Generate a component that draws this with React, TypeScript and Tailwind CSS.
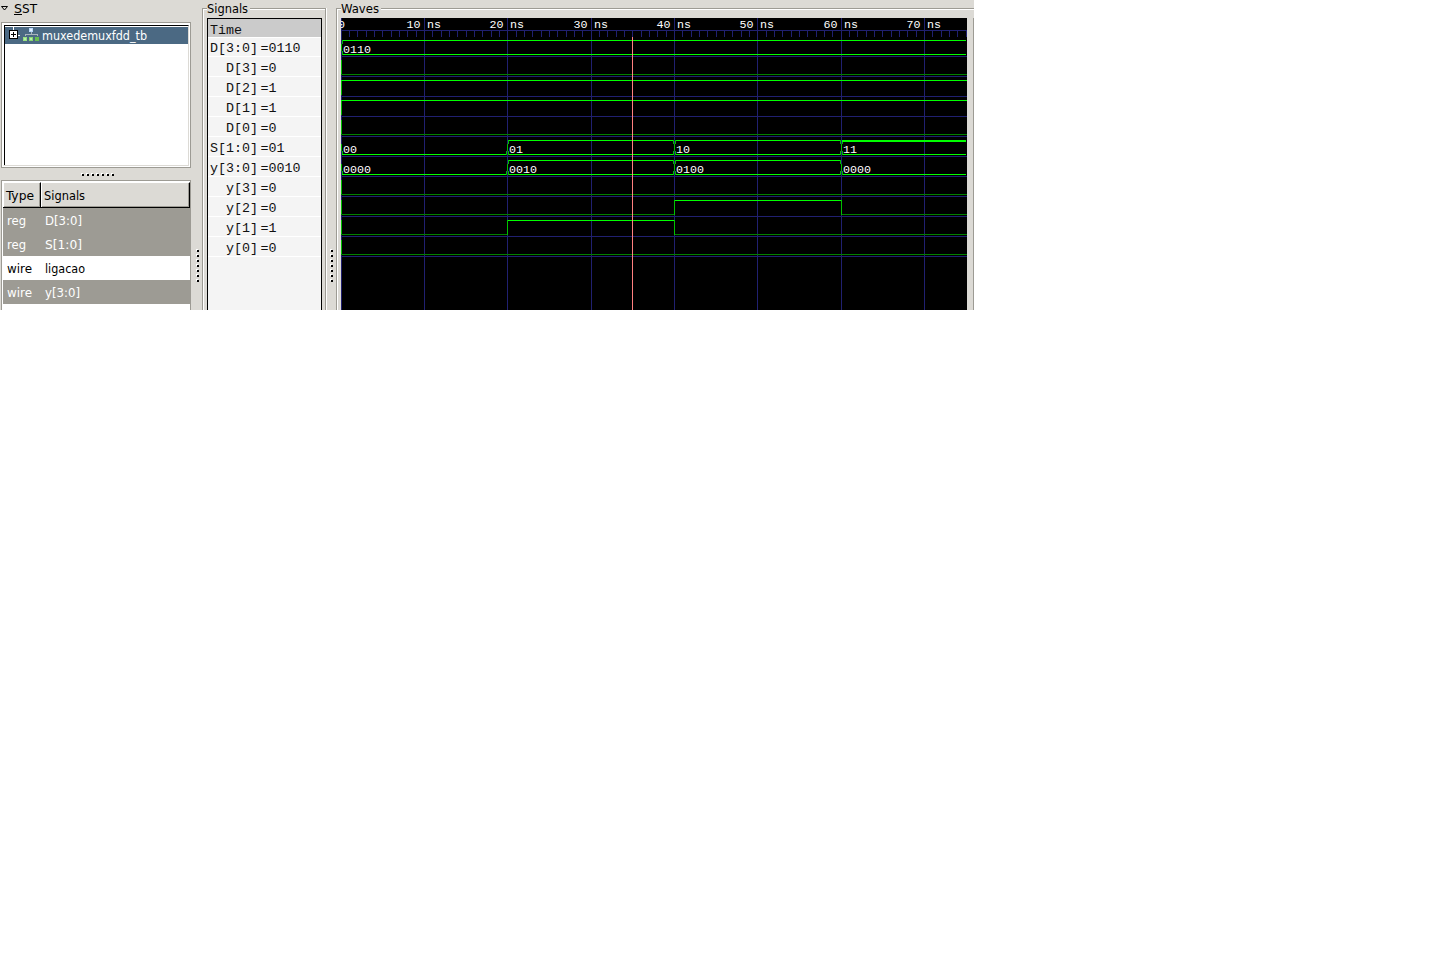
import React from 'react';

const UI = "font-['DejaVu_Sans_Condensed','DejaVu_Sans',sans-serif] text-[12px] [font-stretch:condensed]";
const START = 341;
const GRID = [0, 83, 166, 250, 333, 416, 500, 583];
const ROWS = [
  { name: 'D[3:0]', value: '0110' },
  { name: '  D[3]', value: '0' },
  { name: '  D[2]', value: '1' },
  { name: '  D[1]', value: '1' },
  { name: '  D[0]', value: '0' },
  { name: 'S[1:0]', value: '01' },
  { name: 'y[3:0]', value: '0010' },
  { name: '  y[3]', value: '0' },
  { name: '  y[2]', value: '0' },
  { name: '  y[1]', value: '1' },
  { name: '  y[0]', value: '0' },
];

function Label({ text, size, x, y, width, fill = '#000', className = '' }: {
  text: string; size: number; x: number; y: number; width: number; fill?: string; className?: string;
}) {
  return (
    <text x={x} y={y} fontSize={size} fill={fill} textLength={width} lengthAdjust="spacingAndGlyphs" className={className} xmlSpace="preserve">
      {text}
    </text>
  );
}

/* A short piece of interface text, fitted to a fixed advance width. */
function Caption({ text, width, fill }: { text: string; width: number; fill?: string }) {
  return (
    <svg width={width + 2} height={18} className={`block shrink-0 overflow-visible ${UI}`}>
      <Label text={text} size={12} x={0} y={13} width={width} fill={fill} />
    </svg>
  );
}

function Grip({ vertical = false }: { vertical?: boolean }) {
  return (
    <div className={vertical ? 'flex flex-col gap-[2px]' : 'flex gap-[2px]'}>
      {Array.from({ length: 7 }, (_, i) => (
        <svg key={i} width="3" height="3" shapeRendering="crispEdges" className="block">
          <rect width="2" height="2" fill="#fff" />
          <rect x="1" y="1" width="2" height="2" fill="#000" />
        </svg>
      ))}
    </div>
  );
}

function Tree() {
  return (
    <div className="ml-px mt-[4px] h-[146px] w-[190px] border border-[#9d9b94] bg-white p-px">
      <div className="h-full border border-r-0 border-t-white border-l-white border-b-[#dcdad5] bg-white">
        <div className="h-full border border-b-0 border-l-black border-t-black border-r-[#dcdad5] pt-px">
          <div className="flex h-[17px] items-center bg-[#4b6983]">
            <svg width="37" height="17" shapeRendering="crispEdges" className="block shrink-0">
              <path d="M8 0h1v3h-1z M13 8h2v1h-2z" fill="#fff" />
              <rect x="4" y="3" width="9" height="9" fill="#000" />
              <rect x="5" y="4" width="7" height="7" fill="#fff" />
              <path d="M6 7h5v1h-5z M8 5h1v5h-1z" fill="#000" />
              <rect x="24" y="1" width="4" height="4" fill="#b9d7fa" />
              <rect x="25" y="2" width="2" height="2" fill="#e4f0ff" />
              <path d="M26 5v2M20 9V7h12v2" fill="none" stroke="#a9b4bd" />
              <rect x="18" y="10" width="4" height="4" fill="#98e080" />
              <rect x="24" y="10" width="4" height="4" fill="#87d570" />
              <rect x="30" y="10" width="4" height="4" fill="#67bd50" />
              <path d="M19 11h2v2h-2z M25 11h2v2h-2z" fill="#b6efa8" />
            </svg>
            <Caption text="muxedemuxfdd_tb" width={105} fill="#fff" />
          </div>
        </div>
      </div>
    </div>
  );
}

const VARIABLES = [
  { type: 'reg', name: 'D[3:0]', tw: 19, nw: 37, selected: true },
  { type: 'reg', name: 'S[1:0]', tw: 19, nw: 37, selected: true },
  { type: 'wire', name: 'ligacao', tw: 25, nw: 40, selected: false },
  { type: 'wire', name: 'y[3:0]', tw: 25, nw: 35, selected: true },
];

function Variables() {
  return (
    <div className="ml-px mt-[4px] h-[130px] w-[190px] overflow-hidden border border-b-0 border-[#9d9b94] bg-white pl-px pt-px">
      <div className="flex h-[26px] border-b border-black">
        <div className="flex h-[25px] w-[38px] items-center border-l border-t border-r border-l-white border-t-white border-r-black bg-[#dcdad5] pl-[2px] pt-px shadow-[inset_-1px_-1px_0_#9d9b94]">
          <Caption text="Type" width={28} />
        </div>
        <div className="flex h-[25px] flex-1 items-center border-l border-t border-r border-l-white border-t-white border-r-black bg-[#dcdad5] pl-[2px] pt-px shadow-[inset_-1px_-1px_0_#9d9b94]">
          <Caption text="Signals" width={41} />
        </div>
      </div>
      {VARIABLES.map((v, i) => (
        <div key={i} className={v.selected ? 'flex h-6 items-center bg-[#9d9b94] pl-[4px] pt-[2px]' : 'flex h-6 items-center bg-white pl-[4px] pt-[2px]'}>
          <div className="w-[38px]"><Caption text={v.type} width={v.tw} fill={v.selected ? '#fff' : '#000'} /></div>
          <Caption text={v.name} width={v.nw} fill={v.selected ? '#fff' : '#000'} />
        </div>
      ))}
    </div>
  );
}

function FrameTitle({ text, width }: { text: string; width: number }) {
  return (
    <div className="flex h-[18px]">
      <div className="mt-[8px] h-[10px] w-[5px] shrink-0 border-l border-t border-[#9d9b94] shadow-[inset_1px_1px_0_#fff]" />
      <Caption text={text} width={width} />
      <div className="mt-[8px] h-[2px] flex-1 border-t border-[#9d9b94] bg-white" />
    </div>
  );
}

function SignalNames() {
  return (
    <div className="flex h-[310px] w-[125px] flex-col">
      <div className="relative">
        <FrameTitle text="Signals" width={41} />
        <div className="absolute right-0 top-[8px] h-[10px] w-[2px] border-l border-[#9d9b94] bg-white" />
      </div>
      <div className="flex flex-1 justify-between">
        <div className="w-[2px] border-l border-[#9d9b94] bg-white" />
        <div className="w-[115px] border border-b-0 border-black bg-[#f4f4f4] font-['Liberation_Mono',monospace] text-[13.33px] leading-[19px] text-[#111]">
          <div className="h-[19px] border-b border-white bg-[#cbcbcb] pl-[2px] pt-[2px]">Time</div>
          {ROWS.map((row, i) => (
            <div key={row.name} className={i === 0 ? 'flex h-[19px] whitespace-pre border-b border-white pl-[2px] pt-px' : 'flex h-[20px] whitespace-pre border-b border-white pl-[2px] pt-[2px]'}>
              <span className="w-[50.5px]">{row.name}</span>
              <span>={row.value}</span>
            </div>
          ))}
        </div>
        <div className="w-[2px] border-l border-[#9d9b94] bg-white" />
      </div>
    </div>
  );
}

function Box({ x, y, w, h, fill }: { x: number; y: number; w: number; h: number; fill: string }) {
  return <rect x={x} y={y} width={w} height={h} fill={fill} />;
}

const HIGH = '#00ff00';
const LOW = '#008000';
const EDGE = '#00c000';
const BLUE = '#202070';

/* Crossing of two bus values. */
function Crossing({ x, y, left, right }: { x: number; y: number; left: boolean; right: boolean }) {
  return (
    <g>
      {left && <Box x={x - 1} y={y} w={1} h={4} fill={EDGE} />}
      {right && <Box x={x + 1} y={y} w={1} h={4} fill={EDGE} />}
      <Box x={x} y={y + 4} w={1} h={7} fill={EDGE} />
      <Box x={x - 1} y={y + 11} w={1} h={4} fill={EDGE} />
      <Box x={x + 1} y={y + 11} w={1} h={4} fill={EDGE} />
    </g>
  );
}

function Waves() {
  const values = [
    { x: 343, y: 53, t: '0110' },
    { x: 343, y: 153, t: '00' },
    { x: 509, y: 153, t: '01' },
    { x: 676, y: 153, t: '10' },
    { x: 843, y: 153, t: '11' },
    { x: 343, y: 173, t: '0000' },
    { x: 509, y: 173, t: '0010' },
    { x: 676, y: 173, t: '0100' },
    { x: 843, y: 173, t: '0000' },
  ];
  return (
    <svg width="626" height="292" viewBox="341 18 626 292" shapeRendering="crispEdges" className="block shrink-0 bg-black font-['Liberation_Mono',monospace]">
      <Box x={341} y={30} w={626} h={1} fill={BLUE} />
      {GRID.map((g) => <Box key={g} x={START + g} y={18} w={1} h={292} fill={BLUE} />)}
      {Array.from({ length: 76 }, (_, i) => (
        <Box key={i} x={START + Math.floor(i * 8.335)} y={31} w={1} h={6} fill={BLUE} />
      ))}
      {Array.from({ length: 11 }, (_, i) => <Box key={i} x={341} y={56 + i * 20} w={626} h={1} fill={BLUE} />)}

      {[60, 80, 100, 120, 180, 200, 220, 240].map((y) => <Box key={y} x={341} y={y} w={1} h={15} fill={EDGE} />)}
      {[74, 134, 194, 254].map((y) => <Box key={y} x={341} y={y} w={626} h={1} fill={LOW} />)}
      {[80, 100].map((y) => <Box key={y} x={341} y={y} w={626} h={1} fill={HIGH} />)}

      <Box x={342} y={40} w={624} h={1} fill={HIGH} />
      <Box x={342} y={54} w={624} h={1} fill={HIGH} />
      <Box x={342} y={40} w={1} h={4} fill={EDGE} />
      <Box x={341} y={44} w={1} h={7} fill={EDGE} />
      <Box x={342} y={51} w={1} h={4} fill={EDGE} />

      {[140, 160].map((y) => (
        <g key={y}>
          <Box x={341} y={y + 4} w={1} h={7} fill={EDGE} />
          <Box x={342} y={y + 11} w={1} h={4} fill={EDGE} />
          <Box x={342} y={y + 14} w={165} h={1} fill={HIGH} />
          <Box x={508} y={y + 14} w={166} h={1} fill={HIGH} />
          <Box x={675} y={y + 14} w={166} h={1} fill={HIGH} />
          <Box x={842} y={y + 14} w={124} h={1} fill={HIGH} />
          <Box x={508} y={y} w={166} h={1} fill={HIGH} />
          <Box x={675} y={y} w={166} h={1} fill={HIGH} />
          <Crossing x={507} y={y} left={false} right />
          <Crossing x={674} y={y} left right />
          <Crossing x={841} y={y} left right={y === 140} />
        </g>
      ))}
      <Box x={842} y={140} w={124} h={2} fill={HIGH} />

      <Box x={341} y={214} w={334} h={1} fill={LOW} />
      <Box x={674} y={200} w={168} h={1} fill={HIGH} />
      <Box x={841} y={214} w={126} h={1} fill={LOW} />
      <Box x={674} y={200} w={1} h={15} fill={EDGE} />
      <Box x={841} y={200} w={1} h={15} fill={EDGE} />
      <Box x={341} y={234} w={167} h={1} fill={LOW} />
      <Box x={507} y={220} w={168} h={1} fill={HIGH} />
      <Box x={674} y={234} w={293} h={1} fill={LOW} />
      <Box x={507} y={220} w={1} h={15} fill={EDGE} />
      <Box x={674} y={220} w={1} h={15} fill={EDGE} />

      <Box x={632} y={37} w={1} h={273} fill="#ff8080" />

      <text x={338} y={28} fontSize={11.67} fill="#fff">0</text>
      {GRID.slice(1).map((g, i) => (
        <text key={g} x={START + g - 17.5} y={28} fontSize={11.67} fill="#fff">
          <tspan>{(i + 1) * 10}</tspan>
          <tspan x={START + g + 3}>ns</tspan>
        </text>
      ))}
      {values.map((v, i) => <text key={i} x={v.x} y={v.y} fontSize={11.67} fill="#fff">{v.t}</text>)}
    </svg>
  );
}

export default function App() {
  return (
    <div className="h-[976px] w-[1444px] bg-white">
      <div className="flex h-[310px] w-[974px] overflow-hidden bg-[#dcdad5] text-black">
        <div className="h-[310px] w-[192px] shrink-0">
          <div className="flex h-[18px]">
            <svg width="14" height="18" className="block shrink-0">
              <path d="M1.5 6.5h6L4.5 10z" fill="#dcdad5" stroke="#000" />
            </svg>
            <div className="h-[15px] w-[8px] border-b border-black"><Caption text="S" width={8} /></div>
            <Caption text="ST" width={15} />
          </div>
          <Tree />
          <div className="mt-[5px] flex h-[3px] pl-[81px]"><Grip /></div>
          <Variables />
        </div>
        <div className="w-[10px] shrink-0 pl-[4px] pt-[249px]"><Grip vertical /></div>
        <SignalNames />
        <div className="w-[9px] shrink-0 pl-[3px] pt-[249px]"><Grip vertical /></div>
        <div className="flex h-[310px] w-[638px] flex-col">
          <FrameTitle text="Waves" width={38} />
          <div className="flex flex-1">
            <div className="w-[5px] border-l border-[#9d9b94] shadow-[inset_1px_0_0_#fff]" />
            <Waves />
            <div className="w-[7px] border-r border-[#9d9b94]" />
          </div>
        </div>
      </div>
    </div>
  );
}
